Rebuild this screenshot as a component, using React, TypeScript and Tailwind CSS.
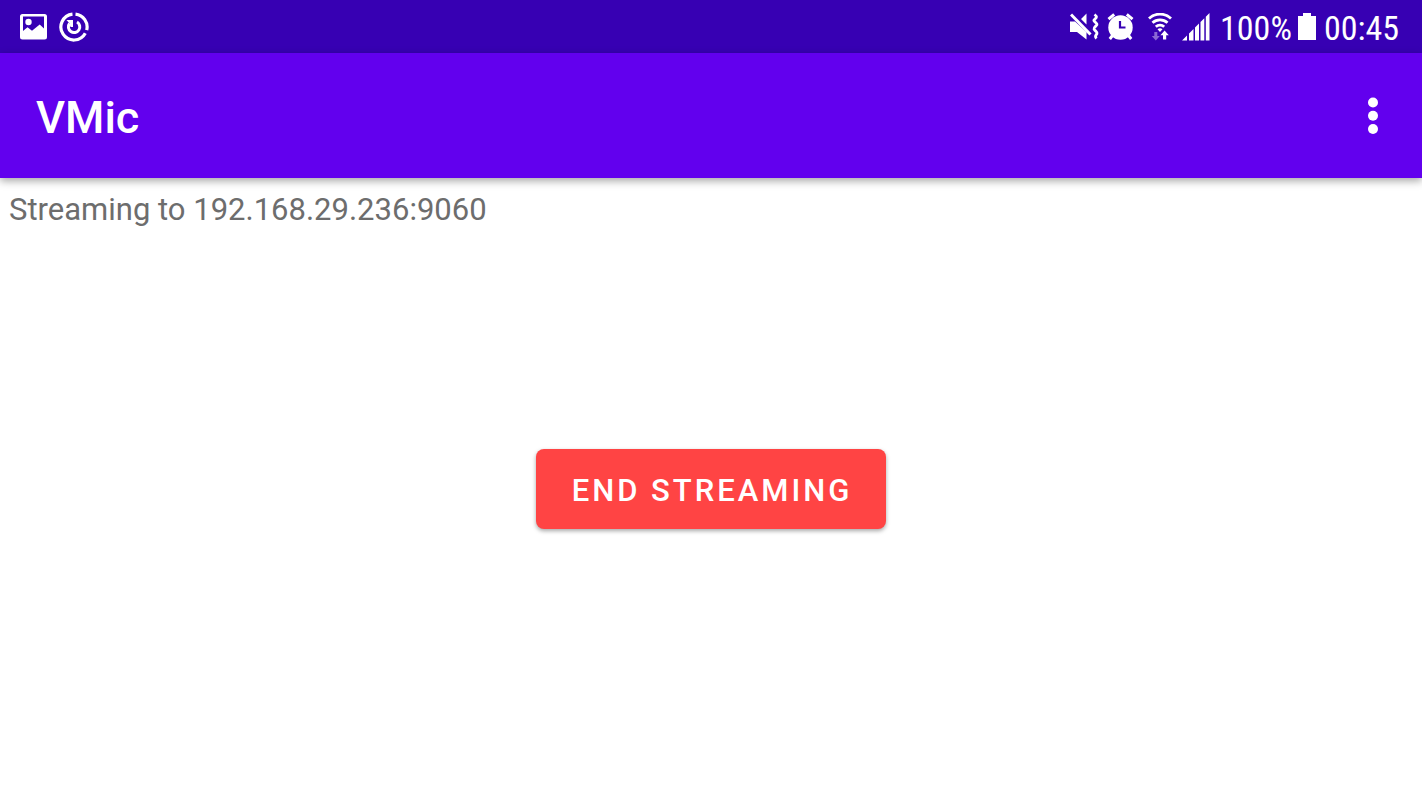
interface StatusIconProps {
  className?: string;
}

const ImageIcon = ({ className }: StatusIconProps) => {
  return (
    <svg className={className} viewBox="0 0 27 26" fill="currentColor">
      <path
        fillRule="evenodd"
        d="M2.5 0h22a2.500 2.500 0 0 1 2.500 2.500v20.500a2.500 2.500 0 0 1-2.500 2.500h-22a2.500 2.500 0 0 1-2.500-2.500v-20.500a2.500 2.500 0 0 1 2.500-2.500zM3 2.500v14.500l4.500-3.700 4.500 3.400 7.700-6.200 4.300 4V2.500z"
      />
      <circle cx="8.5" cy="8" r="3.2" />
    </svg>
  );
};

const SyncIcon = ({ className }: StatusIconProps) => {
  return (
    <svg
      className={className}
      viewBox="0 0 30 30"
      fill="none"
      stroke="currentColor"
      strokeWidth="3.2"
    >
      <path d="M16.500 2.100A13 13 0 0 1 27.700 18.200M26.300 21.300A13 13 0 1 1 13.500 2.100" />
      <path d="M18 10a5.700 5.700 0 1 1-7.500 1.500" strokeWidth="3" />
      <path d="M7.500 8h6.500v7h-2.500l-1-3.500z" fill="currentColor" stroke="none" />
    </svg>
  );
};

const MuteVibrateIcon = ({ className }: StatusIconProps) => {
  return (
    <svg className={className} viewBox="0 0 29 28" fill="currentColor">
      <path d="M0 8.500h5L16.500 19v7.500L7 19H0zM11 6L16.500 0.500v11z" />
      <path d="M1 1.500L20.500 21.500" stroke="currentColor" strokeWidth="3" />
      <path
        d="M24.500 1.500c4 3 0.500 4-0.500 5.500s3.500 3 3 4.500-3.500 3-3 4.500 3.500 3 3 4.500-3 2.500-0.500 5"
        fill="none"
        stroke="currentColor"
        strokeWidth="2.8"
      />
    </svg>
  );
};

const AlarmIcon = ({ className }: StatusIconProps) => {
  return (
    <svg className={className} viewBox="0 0 27 28">
      <circle cx="13.5" cy="14.5" r="12.2" fill="currentColor" />
      <path
        d="M1.500 6.200L7.200 1.400M25.500 6.200L19.800 1.400M5.500 22.500L2.800 26M21.500 22.500l2.700 3.500"
        stroke="currentColor"
        strokeWidth="3"
      />
      <path
        d="M13 8v6.500h5.500"
        fill="none"
        stroke="#3700b3"
        strokeWidth="2.2"
      />
    </svg>
  );
};

const WifiIcon = ({ className }: StatusIconProps) => {
  return (
    <svg className={className} viewBox="0 0 24 28" fill="none">
      <g stroke="currentColor" strokeWidth="2.8">
        <path d="M1 5.500a16 16 0 0 1 22 0" />
        <path d="M4.500 9.800a11 11 0 0 1 15 0" />
        <path d="M7.800 13.800a6.300 6.300 0 0 1 8.400 0" />
      </g>
      <path d="M9.500 16.300a3.800 3.800 0 0 1 5 0L12 19z" fill="currentColor" />
      <path d="M6.300 19h3v4h2.500l-4 4.500-4-4.500h2.500z" fill="#8b69d4" />
      <path
        d="M15 26.500h3.200v-4.200h2.600l-4.200-4.800-4.200 4.800H15z"
        fill="currentColor"
      />
    </svg>
  );
};

const SignalIcon = ({ className }: StatusIconProps) => {
  return (
    <svg className={className} viewBox="0 0 28 28" fill="currentColor">
      <path d="M0 27.500l5-5v5zM7 20.500l4.500-4.500v11.500H7zM13 14.500l4-4v17h-4zM18.500 9l3.800-3.800v22.300h-3.800zM23.800 3.700L27.500 0v27.500h-3.700z" />
    </svg>
  );
};

const BatteryIcon = ({ className }: StatusIconProps) => {
  return (
    <svg className={className} viewBox="0 0 18 27" fill="currentColor">
      <path d="M5 0h8v3h5v24H0V3h5z" />
    </svg>
  );
};

const StatusBar = () => {
  return (
    <div className="flex h-[53px] items-center justify-between bg-[#3700b3] pl-5 pr-[23px] text-white">
      <div className="flex items-center gap-3">
        <ImageIcon className="h-[26px] w-[27px]" />
        <SyncIcon className="h-[30px] w-[30px]" />
      </div>
      <div className="flex items-center font-['Roboto_Condensed','Liberation_Sans_Narrow',Roboto,sans-serif] text-[34px] leading-none">
        <MuteVibrateIcon className="mr-2 h-7 w-[29px]" />
        <AlarmIcon className="mr-[14px] h-7 w-[27px]" />
        <WifiIcon className="mr-[10px] h-7 w-6" />
        <SignalIcon className="mr-[10px] h-7 w-7" />
        <span className="pt-0.5">100%</span>
        <BatteryIcon className="ml-1.5 mr-2 h-[27px] w-[18px]" />
        <span className="pt-0.5">00:45</span>
      </div>
    </div>
  );
};

const AppBar = ({ title }: { title: string }) => {
  return (
    <header className="flex h-[125px] items-center justify-between bg-[#6200ee] pl-9 pr-6 text-white shadow-[0_3px_8px_rgba(0,0,0,0.35)]">
      <h1 className="pt-1 text-[45px] font-medium leading-none">{title}</h1>
      <button
        type="button"
        aria-label="More options"
        className="flex h-[50px] w-[50px] items-center justify-center"
      >
        <svg className="h-[38px] w-[10px]" viewBox="0 0 10 38" fill="currentColor">
          <circle cx="5" cy="5.5" r="5" />
          <circle cx="5" cy="18.8" r="5" />
          <circle cx="5" cy="32" r="5" />
        </svg>
      </button>
    </header>
  );
};

const App = () => {
  return (
    <div className="flex min-h-screen flex-col bg-white font-[Roboto,sans-serif]">
      <StatusBar />
      <AppBar title="VMic" />
      <main className="flex flex-1 flex-col">
        <p className="px-[9px] pt-[14px] text-[31px] leading-9 text-[#6d6d6d]">
          Streaming to 192.168.29.236:9060
        </p>
        <div className="flex flex-1 items-center justify-center pb-[50px]">
          <button
            type="button"
            className="h-20 rounded-lg bg-[#ff4444] pl-9 pr-[34px] pt-1 text-[31px] font-medium uppercase tracking-[3px] text-white shadow-[0_2px_4px_rgba(0,0,0,0.35)]"
          >
            End streaming
          </button>
        </div>
      </main>
    </div>
  );
};

export default App;
